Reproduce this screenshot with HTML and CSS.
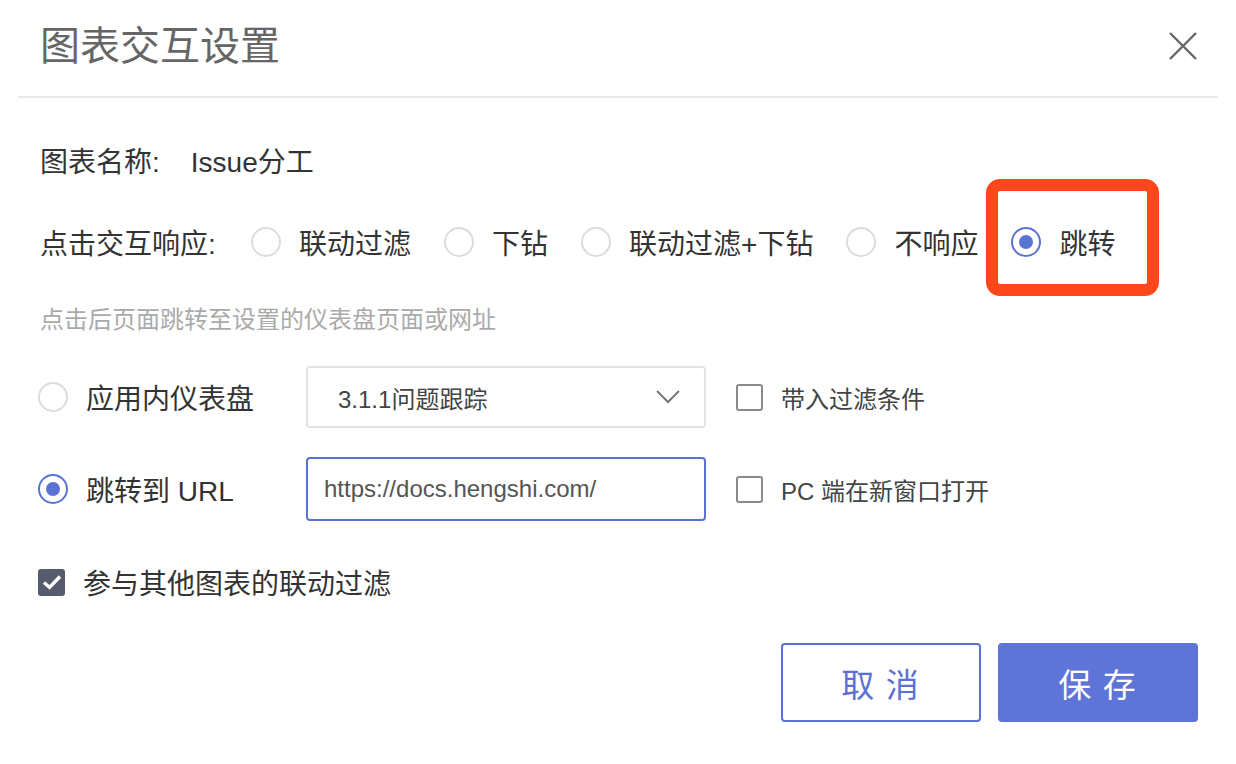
FILE: index.html
```html
<!DOCTYPE html>
<html>

	<head>
		<meta charset="UTF-8">
		<title>图表交互设置</title>
		<link rel="stylesheet" href="styles.css">
	</head>

	<body>
		<div class="dialog">
			<div class="header">
				<h1 class="title">图表交互设置</h1>
				<svg class="close" width="30" height="30" viewBox="0 0 30 30">
					<path d="M2 2 L28 28 M28 2 L2 28" stroke="#666" stroke-width="2.4" fill="none" />
				</svg>
			</div>

			<div class="body">
				<div class="row name-row">
					<span class="label">图表名称:</span>
					<span class="value">Issue分工</span>
				</div>

				<div class="row action-row">
					<span class="label action-label">点击交互响应:</span>
					<div class="radios">
						<label class="radio-item"><i class="radio"></i>联动过滤</label>
						<label class="radio-item"><i class="radio"></i>下钻</label>
						<label class="radio-item"><i class="radio"></i>联动过滤+下钻</label>
						<label class="radio-item"><i class="radio"></i>不响应</label>
						<label class="radio-item jump"><i class="radio checked"></i>跳转
							<span class="mark"></span>
						</label>
					</div>
				</div>

				<div class="hint">点击后页面跳转至设置的仪表盘页面或网址</div>

				<div class="target-row">
					<label class="radio-item target-label"><i class="radio"></i>应用内仪表盘</label>
					<div class="select">
						<span>3.1.1问题跟踪</span>
						<svg width="24" height="14" viewBox="0 0 24 14">
							<path d="M1 1 L12 12 L23 1" stroke="#777" stroke-width="2" fill="none" />
						</svg>
					</div>
					<label class="check-item"><i class="checkbox"></i>带入过滤条件</label>
				</div>

				<div class="target-row url-row">
					<label class="radio-item target-label"><i class="radio checked"></i>跳转到 URL</label>
					<div class="input">https://docs.hengshi.com/</div>
					<label class="check-item"><i class="checkbox"></i>PC 端在新窗口打开</label>
				</div>

				<div class="row join-row">
					<label class="check-item join"><i class="checkbox checked">
						<svg width="20" height="16" viewBox="0 0 20 16">
							<path d="M2 8.5 L7.5 13.5 L18 2.5" stroke="#fff" stroke-width="3.4" fill="none" />
						</svg>
					</i>参与其他图表的联动过滤</label>
				</div>

				<div class="footer">
					<button class="btn cancel">取 消</button>
					<button class="btn save">保 存</button>
				</div>
			</div>
		</div>
	</body>

</html>
```
FILE: styles.css
```css
* {
	margin: 0;
	padding: 0;
	box-sizing: border-box;
}

body {
	background: #fff;
	font-family: "Liberation Sans", "Noto Sans CJK SC", sans-serif;
	color: #333;
}

.dialog {
	width: 1236px;
	height: 764px;
	background: #fff;
}

.header {
	height: 98px;
	margin: 0 18px;
	padding: 0 20px 4px 22px;
	border-bottom: 2px solid #e8e8e8;
	display: flex;
	align-items: center;
	justify-content: space-between;
}

.title {
	font-size: 40px;
	font-weight: normal;
	color: #666;
	line-height: 48px;
}

.close {
	display: block;
}

.body {
	padding: 0 38px 0 38px;
}

.row {
	display: flex;
	align-items: center;
	height: 40px;
	font-size: 28px;
	padding-left: 2px;
}

.name-row {
	margin-top: 42px;
}

.name-row .value {
	margin-left: 31px;
}

.action-row {
	margin-top: 42px;
}

.action-label {
	width: 213px;
}

.radios {
	display: flex;
	align-items: center;
	gap: 33px;
	margin-left: -2px;
}

.radio-item {
	display: flex;
	align-items: center;
	gap: 18px;
	font-size: 28px;
	color: #333;
	position: relative;
}

.radio {
	display: block;
	width: 30px;
	height: 30px;
	border: 2px solid #dcdcdc;
	border-radius: 50%;
	position: relative;
}

.radio.checked {
	border-color: #5b72d5;
}

.radio.checked::after {
	content: "";
	position: absolute;
	width: 14px;
	height: 14px;
	left: 6px;
	top: 6px;
	border-radius: 50%;
	background: #5b72d5;
}

.mark {
	position: absolute;
	left: -25px;
	top: -43px;
	width: 173px;
	height: 117px;
	border: 12px solid #ff471c;
	border-radius: 14px;
}

.hint {
	margin-top: 42px;
	padding-left: 2px;
	font-size: 24px;
	line-height: 32px;
	color: #aaa;
}

.target-row {
	display: flex;
	align-items: center;
	margin-top: 30px;
}

.url-row {
	margin-top: 29px;
}

.target-label {
	width: 268px;
}

.select,
.input {
	width: 400px;
	height: 62px;
	border: 2px solid #e3e3e3;
	border-radius: 4px;
	display: flex;
	align-items: center;
	font-size: 24px;
}

.select {
	justify-content: space-between;
	padding: 0 24px 0 30px;
	color: #444;
}

.input {
	height: 64px;
	border-color: #5b72d5;
	padding-left: 16px;
	color: #555;
}

.check-item {
	display: flex;
	align-items: center;
	gap: 18px;
	margin-left: 30px;
	font-size: 24px;
	color: #444;
}

.checkbox {
	display: flex;
	align-items: center;
	justify-content: center;
	width: 27px;
	height: 27px;
	border: 2px solid #8a8a8a;
	border-radius: 3px;
}

.checkbox.checked {
	background: #575b6e;
	border-color: #575b6e;
}

.join-row {
	margin-top: 41px;
	padding-left: 0;
}

.check-item.join {
	margin-left: 0;
	font-size: 28px;
	color: #333;
}

.footer {
	display: flex;
	justify-content: flex-end;
	gap: 17px;
	margin-top: 41px;
}

.btn {
	width: 200px;
	height: 79px;
	border-radius: 4px;
	font-family: "Noto Sans CJK SC", sans-serif;
	font-size: 33px;
	letter-spacing: 2px;
	cursor: pointer;
}

.cancel {
	background: #fff;
	border: 2px solid #5b72d5;
	color: #5b72d5;
}

.save {
	background: #5e74d6;
	border: 2px solid #5e74d6;
	color: #fff;
}
```
